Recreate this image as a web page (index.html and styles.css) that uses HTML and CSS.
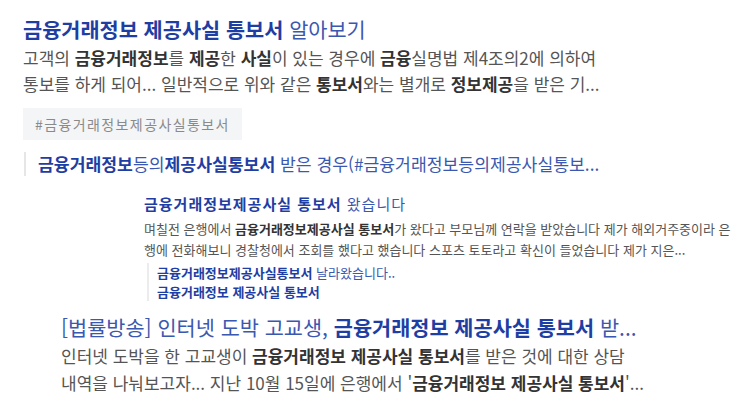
FILE: index.html
```html
<!DOCTYPE html>
<html lang="ko">
<head>
<meta charset="utf-8">
<link rel="stylesheet" href="styles.css">
</head>
<body>
<div class="page">
  <section class="result">
    <h2 class="title"><b>금융거래정보 제공사실 통보서</b> 알아보기</h2>
    <p class="desc">고객의 <b>금융거래정보</b>를 <b>제공</b>한 <b>사실</b>이 있는 경우에 <b>금융</b>실명법 제4조의2에 의하여<br>통보를 하게 되어... 일반적으로 위와 같은 <b>통보서</b>와는 별개로 <b>정보제공</b>을 받은 기...</p>
    <div class="tag">#금융거래정보제공사실통보서</div>
  </section>

  <div class="related"><b>금융거래정보</b>등의<b>제공사실통보서</b> 받은 경우(#금융거래정보등의제공사실통보...</div>

  <section class="sub">
    <h3 class="sub-title"><b>금융거래정보제공사실 통보서</b> 왔습니다</h3>
    <p class="sub-desc">며칠전 은행에서 <b>금융거래정보제공사실 통보서</b>가 왔다고 부모님께 연락을 받았습니다 제가 해외거주중이라 은<br>행에 전화해보니 경찰청에서 조회를 했다고 했습니다 스포츠 토토라고 확신이 들었습니다 제가 지은...</p>
    <ul class="sub-links">
      <li><b>금융거래정보제공사실통보서</b> 날라왔습니다..</li>
      <li><b>금융거래정보 제공사실 통보서</b></li>
    </ul>
  </section>

  <section class="result news">
    <h2 class="title">[법률방송] 인터넷 도박 고교생, <b>금융거래정보 제공사실 통보서</b> 받...</h2>
    <p class="desc">인터넷 도박을 한 고교생이 <b>금융거래정보 제공사실 통보서</b>를 받은 것에 대한 상담<br>내역을 나눠보고자... 지난 10월 15일에 은행에서 '<b>금융거래정보 제공사실 통보서</b>'...</p>
  </section>
</div>
</body>
</html>
```

FILE: styles.css
```css
* { box-sizing: border-box; }
html, body {
  margin: 0;
  padding: 0;
  background: #ffffff;
}
body {
  font-family: "Noto Sans CJK KR", "Noto Sans", sans-serif;
  color: #555555;
  width: 741px;
  height: 417px;
  overflow: hidden;
}
.page {
  padding: 15px 0 0 23px;
}
.title {
  margin: 0;
  font-size: 20.8px;
  line-height: 28px;
  font-weight: 400;
  color: #3b58b0;
  white-space: nowrap;
}
.title b {
  font-weight: 700;
  color: #1f3ea3;
}
.desc {
  margin: 2px 0 0;
  font-size: 17px;
  line-height: 26px;
  color: #555555;
  white-space: nowrap;
}
.desc b {
  font-weight: 700;
  color: #333333;
}
.tag {
  display: inline-block;
  margin-top: 11px;
  padding: 0 12px;
  height: 32px;
  line-height: 32px;
  font-size: 14px;
  letter-spacing: 1.4px;
  color: #8a8a8a;
  background: #f4f5f7;
}
.related {
  margin-top: 12px;
  padding-left: 12px;
  border-left: 2px solid #e6e6e6;
  margin-left: 1px;
  font-size: 17.2px;
  line-height: 24px;
  color: #3b58b0;
  white-space: nowrap;
}
.related b {
  font-weight: 700;
  color: #1f3ea3;
}
.sub {
  margin: 17px 0 0 121px;
}
.sub-title {
  margin: 0;
  font-size: 15px;
  letter-spacing: 1px;
  line-height: 22px;
  font-weight: 400;
  color: #3b58b0;
  white-space: nowrap;
}
.sub-title b {
  font-weight: 700;
  color: #1f3ea3;
}
.sub-desc {
  margin: 3px 0 0;
  font-size: 13px;
  line-height: 21px;
  color: #555555;
  white-space: nowrap;
}
.sub-desc b {
  font-weight: 700;
  color: #333333;
}
.sub-links {
  list-style: none;
  margin: 3px 0 0 3px;
  padding: 0 0 0 8px;
  border-left: 2px solid #ececec;
  font-size: 13px;
  line-height: 19px;
  color: #3b58b0;
  white-space: nowrap;
}
.sub-links b {
  font-weight: 700;
  color: #1f3ea3;
}
.news {
  margin: 11.5px 0 0 38px;
}
.news .desc {
  line-height: 27px;
  margin-top: 1.5px;
}
```
